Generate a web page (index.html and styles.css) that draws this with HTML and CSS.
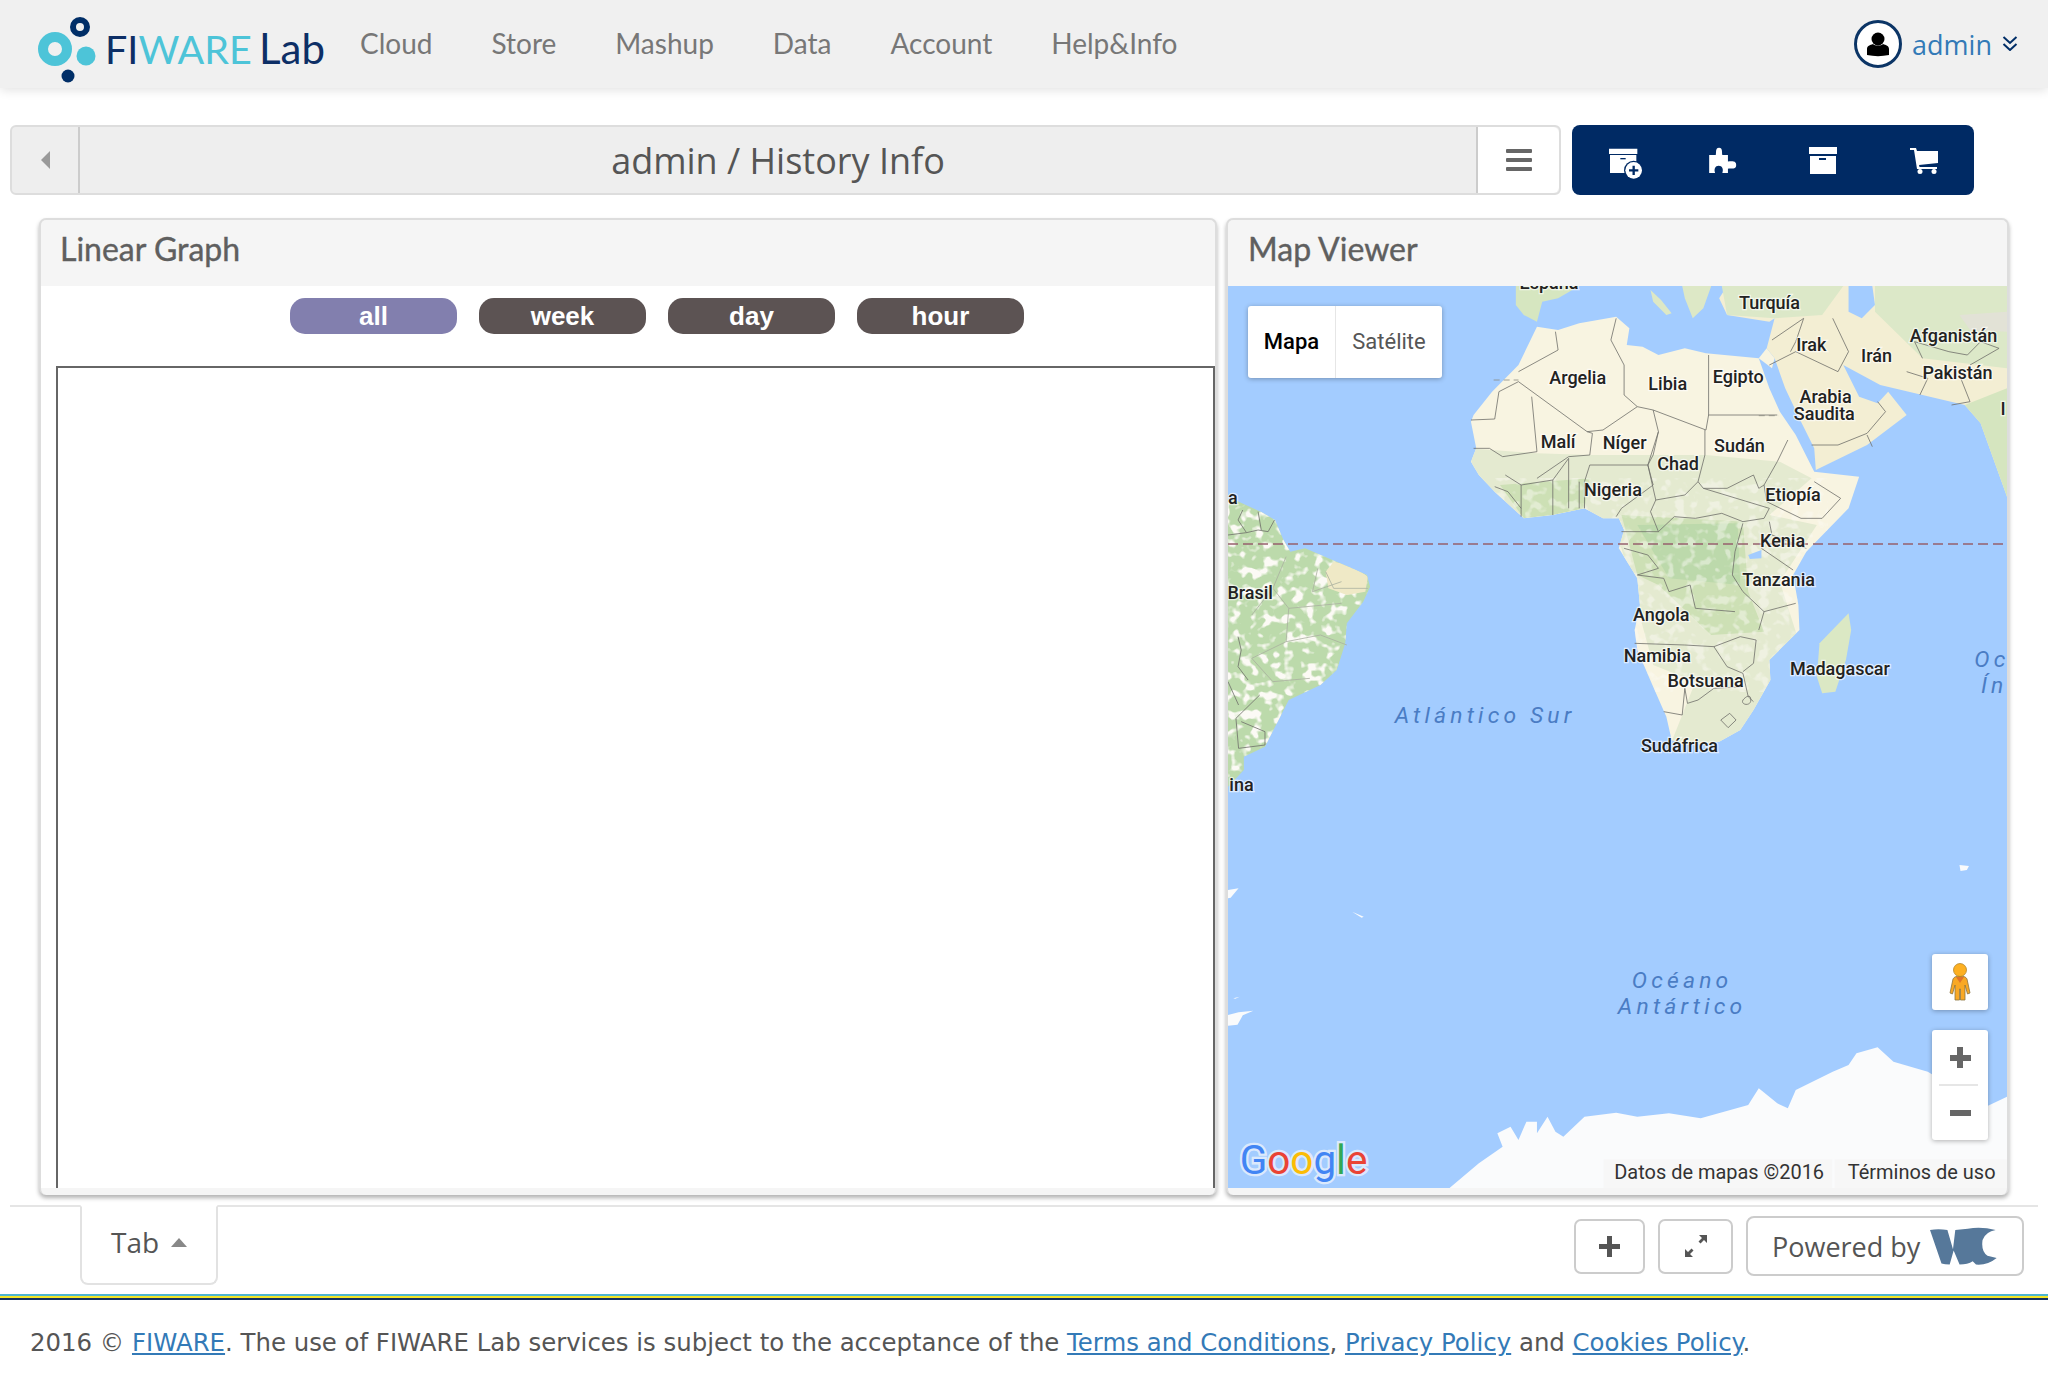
FILE: index.html
```html
<!DOCTYPE html>
<html lang="en">

<head>
    <meta charset="UTF-8">
    <meta name="viewport" content="width=device-width, initial-scale=1.0">
    <title>admin / History Info</title>
    <link rel="stylesheet" href="styles.css">
</head>

<body>
    <header class="site-header">
        <a class="logo" href="#">
            <svg class="logo-mark" width="60" height="70" viewBox="0 0 60 70">
                <circle cx="19" cy="35" r="12" fill="none" stroke="#4dc4d8" stroke-width="10" />
                <circle cx="44" cy="13" r="7" fill="none" stroke="#002e67" stroke-width="6" />
                <circle cx="50" cy="42" r="9.500" fill="#4dc4d8" />
                <circle cx="32" cy="62" r="6.500" fill="#002e67" />
            </svg>
            <span class="logo-text"><span class="navy">FI</span><span class="cyan">WARE</span> <span class="navy lab">Lab</span></span>
        </a>
        <nav class="main-nav">
            <a href="#">Cloud</a>
            <a href="#">Store</a>
            <a href="#">Mashup</a>
            <a href="#">Data</a>
            <a href="#">Account</a>
            <a href="#">Help&amp;Info</a>
        </nav>
        <a class="user-menu" href="#">
            <svg width="48" height="48" viewBox="0 0 48 48">
                <circle cx="24" cy="24" r="22.500" fill="#fff" stroke="#0c3566" stroke-width="3" />
                <circle cx="24" cy="19" r="6.500" fill="#000" />
                <path d="M13 35v-6c0-3 3-4 6-5 2 2 8 2 10 0 3 1 6 2 6 5v6c-7 1.500-15 1.500-22 0z" fill="#000" />
            </svg>
            <span>admin</span>
            <svg width="16" height="15" viewBox="0 0 16 15">
                <path d="M1.500 1l6.500 6 6.500-6M1.500 8l6.500 6 6.500-6" fill="none" stroke="#002e67" stroke-width="2" />
            </svg>
        </a>
    </header>

    <div class="toolbar">
        <div class="title-bar">
            <button class="back-btn" type="button"><span class="arrow-left"></span></button>
            <h1>admin / History Info</h1>
            <button class="menu-btn" type="button"><span></span><span></span><span></span></button>
        </div>
        <div class="action-bar">
            <button type="button">
                <svg class="icon-new" width="35" height="32" viewBox="25 22 105 96">
                    <path d="M28 27h85v16H28zM31 46h79v54H31z" fill="#fff" />
                    <rect x="62" y="55" width="16" height="4" fill="#002a64" />
                    <circle cx="102" cy="92" r="29" fill="#002a64" />
                    <circle cx="102" cy="92" r="25" fill="#fff" />
                    <path d="M102 78v28M88 92h28" stroke="#002a64" stroke-width="7" />
                </svg>
            </button>
            <button type="button">
                <svg width="30" height="28" viewBox="325 15 90 85">
                    <path d="M328 42H348C350 35 346 20 358 20 370 20 366 35 368 42H385V62C395 62 410 58 410 73 410 88 395 82 385 84V97H368C372 85 368 75 357 75 346 75 342 85 346 97H328Z" fill="#fff" />
                </svg>
            </button>
            <button type="button">
                <svg width="30" height="28" viewBox="0 0 30 28">
                    <path d="M1 1h28v7H1zM2 10h26v18H2z" fill="#fff" />
                    <rect x="11" y="12" width="7" height="2" fill="#002a64" />
                </svg>
            </button>
            <button type="button">
                <svg width="30" height="28" viewBox="0 0 30 28">
                    <path d="M1 2h6l1 3h21v12l-19 2 .5 2H28v2H8L5 4H1z" fill="#fff" />
                    <circle cx="11" cy="25.500" r="2.500" fill="#fff" />
                    <circle cx="25" cy="25.500" r="2.500" fill="#fff" />
                </svg>
            </button>
        </div>
    </div>

    <main class="workspace">
        <section class="panel panel-graph">
            <h2 class="panel-title">Linear Graph</h2>
            <div class="panel-body graph-body">
                <div class="range-buttons">
                    <button class="range-btn active" type="button">all</button>
                    <button class="range-btn" type="button">week</button>
                    <button class="range-btn" type="button">day</button>
                    <button class="range-btn" type="button">hour</button>
                </div>
                <div class="graph-box"></div>
            </div>
        </section>

        <section class="panel panel-map">
            <h2 class="panel-title">Map Viewer</h2>
            <div class="panel-body map">
                <svg class="map-canvas" viewBox="940 219 597 691" preserveAspectRatio="none">
                    <defs>
                        <clipPath id="africa-clip">
                            <path id="africa" d="M600 335L640 345 680 325 750 305 775 340 770 390 800 395 830 420 880 400 920 415 1020 430 1040 520 1060 590 1090 660 1125 770 1210 785 1190 880 1110 1010 1085 1080 1095 1170 1097 1245 1040 1335 1042 1395 1010 1485 985 1545 945 1580 880 1590 855 1575 845 1505 820 1415 790 1305 785 1245 795 1170 790 1090 755 1000 765 945 755 910 725 910 690 880 630 900 575 910 520 830 490 780 475 740 485 700 475 620 480 600 515 530 565 450Z" />
                        </clipPath>
                        <clipPath id="brazil-clip">
                            <path id="samerica" d="M0 855H28L78 891 104 915 120 975 133 1010 161 1000 205 1030 243 1055 278 1080 284 1115 271 1160 240 1225 237 1285 221 1365 190 1410 130 1455 85 1595 45 1625 45 1665 15 1715H0Z" />
                        </clipPath>
                        <filter id="speckle" x="0" y="0" width="100%" height="100%">
                            <feTurbulence type="fractalNoise" baseFrequency=".05 .035" numOctaves="2" seed="4" />
                            <feColorMatrix values="0 0 0 0 .97  0 0 0 0 .96  0 0 0 0 .91  0 0 0 7 -3.600" />
                        </filter>
                    </defs>

                    <rect x="940" y="219" width="597" height="691" fill="#a3ccff" />

                    <!-- land, in a coordinate system stretched to the map tiles -->
                    <svg x="940" y="219" width="597" height="691" viewBox="15 213 1475 2706" preserveAspectRatio="none">
                        <g fill="#f8f4e1">
                            <use href="#africa" />
                            <path d="M1020 430L1035 400 1050 430 1045 460Z" />
                            <path d="M1050 430L1070 520 1100 620 1125 700 1128 765 1225 690 1300 600 1265 530 1245 565 1210 545 1180 450 1250 510 1330 540 1410 570 1440 625 1490 845V213H1235L1240 270 1215 310 1190 290 1190 213H960L945 250 960 300 1040 320 1050 310 1035 400Z" fill="#f3eed3" />
                            <path d="M560 213H680L640 250 610 260 600 320 575 300 560 270Z" fill="#d6e6c0" />
                            <path d="M815 225L835 255 855 295 845 300 820 260ZM875 213H930L915 280 895 310 880 250Z" fill="#dde8c6" />
                            <path d="M1195 1245L1185 1335 1165 1430 1140 1435 1130 1385 1135 1285 1190 1195Z" fill="#dbe8c4" />
                        </g>
                        <use href="#samerica" fill="#bcdaab" />

                        <g clip-path="url(#africa-clip)">
                            <path d="M470 700L600 715 700 720 920 720 1060 740 1120 790 1040 900 1130 930 1060 1100 1100 1300 1000 1600 850 1600 900 1400 820 1350 760 1000 700 890 500 900Z" fill="#e4ead0" />
                            <path d="M530 810L700 790 690 880 630 900 575 910ZM760 900L990 920 1000 1130 1030 1250 930 1260 830 1110 790 1080Z" fill="#cde0b5" />
                            <path d="M790 930L980 925 985 1110 850 1090Z" fill="#bcd9ab" />
                            <rect x="500" y="790" width="650" height="640" fill="#fff" filter="url(#speckle)" opacity="0.45" />
                        </g>
                        <g clip-path="url(#brazil-clip)">
                            <rect x="0" y="855" width="300" height="860" fill="#fff" filter="url(#speckle)" />
                            <path d="M200 1070L215 1040 250 1050 280 1085 275 1130 240 1140 205 1120Z" fill="#efe9c6" />
                        </g>

                        <path d="M950 213H1180L1140 300 1050 310 960 300ZM1240 213H1490V460L1330 430 1240 290Z" fill="#dce8c8" />
                        <path d="M1400 300L1490 290V350L1420 345Z" fill="#e2e2d6" />
                        <path d="M1410 570L1440 625 1490 845V520Z" fill="#d5e5bf" />
                        <path d="M1000 1020L1025 1005 1025 1030 1003 1032Z" fill="#a3ccff" />

                        <!-- Antarctica -->
                        <path d="M435 2918L490 2845 535 2795 525 2755 550 2735 565 2775 580 2720H600V2755L620 2705 635 2750 650 2765 690 2705 750 2693 790 2705 850 2695 910 2710 1000 2670 1020 2620 1055 2665 1075 2680 1090 2625 1160 2570 1190 2550 1205 2515 1245 2497 1275 2540 1340 2570 1450 2675 1490 2645V2920H435Z" fill="#fafbfc" />
                        <path d="M1400 1950l18 3-4 12-12 3zM250 2090l22 15-4 3zM15 2025l20-5-15 28-5 2zM15 2400l20-8 28-5-20 14-10 28-25 5zM25 2350l12-5-8 6z" fill="#fafbfc" />

                        <!-- borders -->
                        <g class="borders">
                            <path d="M565 470L640 405 635 350M475 615L520 612 528 530 565 500 695 650 725 645 790 575 765 540 765 450 740 375 750 310" />
                            <path d="M590 545L600 710 535 725 510 700 480 700M695 650L705 655 700 720 660 725 600 790M700 750L810 750 830 650 820 585 790 575" />
                            <path d="M820 585L920 645 925 600 925 420M925 600L1055 600M918 645V720L905 800 915 820 960 820 1010 780 1020 820 1030 810 1055 740 1075 675" />
                            <path d="M830 650L820 720 810 750 825 855M905 800L880 840 825 855 815 890 830 950 860 905 900 910 950 895 990 920 1030 910 1040 880 915 820" />
                            <path d="M1030 810L1035 860 1100 910 1140 910 1175 850 1125 800M700 750L690 800 690 880M810 750L820 810 760 880 750 905" />
                            <path d="M990 925L975 1010 970 1080 990 1130 1030 1190 1020 1245M760 950H830M765 1000L810 1020 830 1060 790 1080 840 1090 850 1130 890 1110 900 1180 975 1190" />
                            <path d="M1040 920L1045 960 1110 1000M1025 1000L1085 1065M1030 1190L1090 1165M630 795V900M660 730V880M680 800V880M570 810V905M540 780L570 810 630 795 660 730M520 815L545 830 570 880" />
                            <path d="M785 1285L880 1290 935 1295 985 1265 1015 1275 1010 1345 990 1370M935 1295L960 1355 990 1375 1000 1445 1010 1460M880 1420L875 1500 840 1490M948 1515L965 1495 977 1515 962 1538ZM990 1455C985 1470 1005 1475 1005 1455S995 1445 990 1455ZM880 1420L885 1465 905 1455 935 1420 990 1415" />
                            <path d="M1120 690L1170 690 1225 655 1260 590 1245 560M1225 660L1235 695M1330 430L1315 380 1380 410 1415 420 1440 380 1475 400 1420 450M1160 310L1190 410 1170 470 1090 410 1040 450M1105 310L1090 380 1080 410M1045 375L1105 310M1400 480L1420 560 1385 570M1325 540L1340 490 1300 470" />
                            <path d="M43 885L34 915 50 953 15 960M50 953L72 945 91 950 103 915M72 890L78 945M34 1265L40 1305 34 1355 53 1395M75 1440L30 1510 35 1600 85 1590 85 1550 40 1520M15 1400L35 1470" />
                        </g>
                        <g class="state-lines">
                            <path d="M125 1025L100 1120 60 1200M100 1120L130 1180 230 1165M185 1060L175 1130 230 1100M130 1180L125 1280 190 1260 240 1290M125 1280L60 1330 100 1400 170 1390M200 1070L215 1120H280" />
                        </g>
                        <path class="sahara-dash" d="M518 495H565M1020 602H1058" />

                        <!-- equator -->
                        <path class="equator" d="M15 987H1490" />
                    </svg>

                    <g class="labels">
                        <text x="1186" y="221">España</text>
                        <text x="1355" y="237">Turquía</text>
                        <text x="1387" y="269">Irak</text>
                        <text x="1437" y="277">Irán</text>
                        <text x="1496" y="262">Afganistán</text>
                        <text x="1499" y="290">Pakistán</text>
                        <text x="1208" y="294">Argelia</text>
                        <text x="1277" y="299">Libia</text>
                        <text x="1331" y="293">Egipto</text>
                        <text x="1398" y="309">Arabia</text>
                        <text x="1397" y="322">Saudita</text>
                        <text x="1193" y="343">Malí</text>
                        <text x="1244" y="344">Níger</text>
                        <text x="1332" y="346">Sudán</text>
                        <text x="1285" y="360">Chad</text>
                        <text x="1373" y="384">Etiopía</text>
                        <text x="1235" y="380">Nigeria</text>
                        <text x="1365" y="419">Kenia</text>
                        <text x="1362" y="449">Tanzania</text>
                        <text x="957" y="459">Brasil</text>
                        <text x="1272" y="476">Angola</text>
                        <text x="1269" y="507">Namibia</text>
                        <text x="1306" y="526">Botsuana</text>
                        <text x="1409" y="517">Madagascar</text>
                        <text x="1286" y="576">Sudáfrica</text>
                        <text class="edge" x="940" y="386">a</text>
                        <text class="edge" x="941" y="606">ina</text>
                        <text class="edge" x="1532" y="318">I</text>
                    </g>
                    <g class="ocean-labels">
                        <text x="1137" y="554">Atlántico Sur</text>
                        <text class="edge" x="1512" y="511">Oc</text>
                        <text class="edge" x="1517" y="531">Ín</text>
                        <text x="1288" y="757">Océano</text>
                        <text x="1288" y="777">Antártico</text>
                    </g>

                    <text class="google-mark" x="949" y="899"><tspan fill="#4285f4">G</tspan><tspan fill="#ea4335">o</tspan><tspan fill="#fbbc05">o</tspan><tspan fill="#4285f4">g</tspan><tspan fill="#34a853">l</tspan><tspan fill="#ea4335">e</tspan></text>

                    <rect class="attribution" x="1228" y="888" width="175" height="22" />
                    <rect class="attribution" x="1405" y="888" width="132" height="22" />
                    <text class="attribution-text" x="1236" y="903">Datos de mapas ©2016</text>
                    <text class="attribution-text" x="1415" y="903">Términos de uso</text>
                </svg>

                <div class="map-type">
                    <button class="selected" type="button">Mapa</button>
                    <button type="button">Satélite</button>
                </div>
                <button class="street-view" type="button">
                    <svg width="22" height="38" viewBox="0 0 22 38">
                        <path d="M11 13c-4 0-6 1-7 3L1 30l2.500 1L6 22v15h4.500V26h1v11H16V22l2.500 9 2.500-1-3-14c-1-2-3-3-7-3z" fill="#f9a825" stroke="#8a7440" stroke-width=".8" />
                        <circle cx="11" cy="7" r="6.500" fill="#fdb022" stroke="#a87a1c" stroke-width=".7" />
                        <path d="M7 14h8l-4 6z" fill="#e0742a" />
                    </svg>
                </button>
                <div class="zoom-control">
                    <button type="button"><span class="plus-icon"></span></button>
                    <button type="button"><span class="minus-icon"></span></button>
                </div>
            </div>
        </section>
    </main>

    <div class="tab-bar">
        <button class="tab" type="button">Tab <span class="caret-up"></span></button>
        <div class="tab-actions">
            <button class="tool-btn btn-add" type="button"><span class="plus-icon"></span></button>
            <button class="tool-btn btn-expand" type="button">
                <svg width="24" height="24" viewBox="0 0 24 24">
                    <path d="M15 1h8v8l-3-3-3.500 3.500-2-2L18 4zM9 23H1v-8l3 3 3.500-3.500 2 2L6 20z" fill="#555" />
                </svg>
            </button>
            <a class="powered-by" href="#">Powered by
                <svg width="67" height="39" viewBox="35 22 204 116">
                    <path d="M35 30Q60 25 88 30L105 88 112 30 150 26Q190 18 235 30 205 35 195 60 190 95 210 108L238 115Q210 138 175 135L165 125Q150 135 125 135L107 92 95 135Q80 135 70 132Z" fill="#56789a" />
                </svg>
            </a>
        </div>
    </div>

    <footer class="site-footer">
        <p>2016 © <a href="#">FIWARE</a>. The use of FIWARE Lab services is subject to the acceptance of the <a href="#">Terms and Conditions</a>, <a href="#">Privacy Policy</a> and <a href="#">Cookies Policy</a>.</p>
    </footer>
</body>

</html>
```

FILE: styles.css
```css
* {
    box-sizing: border-box;
}

body {
    margin: 0;
    background-color: #fff;
    color: #555;
    font-family: "Open Sans", sans-serif;
    overflow: hidden;
}

a {
    text-decoration: none;
}

button {
    font-family: inherit;
    cursor: pointer;
}

/* top header */
.site-header {
    height: 88px;
    background-color: #f0f0f0;
    box-shadow: 0 2px 10px rgba(0, 0, 0, 0.12);
    display: flex;
    align-items: center;
    padding: 0 30px 0 36px;
}

.logo {
    display: flex;
    align-items: center;
    width: 324px;
}

.logo-mark {
    margin-top: 10px;
    flex: none;
}

.logo-text {
    font-family: "Lato", sans-serif;
    font-size: 39.500px;
    word-spacing: -3px;
    margin-left: 9px;
    margin-top: 8px;
    white-space: nowrap;
}

.navy {
    color: #0d2f66;
}

.cyan {
    color: #4dc4d8;
}

.lab {
    font-size: 42px;
}

.main-nav {
    display: flex;
    gap: 59px;
    font-family: "Lato", sans-serif;
    font-size: 28px;
    margin-top: -2px;
}

.main-nav a {
    color: #777;
}

.user-menu {
    margin-left: auto;
    display: flex;
    align-items: center;
    gap: 10px;
    color: #337ab7;
    font-size: 27px;
}

.user-menu svg:last-child {
    margin-top: -2px;
}

/* title and action bar */
.toolbar {
    display: flex;
    margin: 37px 0 0 10px;
    height: 70px;
}

.title-bar {
    width: 1551px;
    display: flex;
    background-color: #eee;
    border: 2px solid #ddd;
    border-radius: 6px;
}

.title-bar h1 {
    flex: 1;
    margin: 0;
    font-size: 36px;
    font-weight: 400;
    line-height: 68px;
    text-align: center;
    color: #555;
}

.back-btn {
    width: 68px;
    background: none;
    border: none;
    border-right: 2px solid #ccc;
    display: flex;
    align-items: center;
    padding: 0 0 0 29px;
}

.arrow-left {
    border-style: solid;
    border-width: 9px 9px 9px 0;
    border-color: transparent #999 transparent transparent;
}

.menu-btn {
    width: 83px;
    background-color: #fff;
    border: none;
    border-left: 2px solid #ccc;
    border-radius: 0 6px 6px 0;
    display: flex;
    flex-direction: column;
    align-items: center;
    justify-content: center;
    gap: 5px;
}

.menu-btn span {
    width: 26px;
    height: 4px;
    border-radius: 1px;
    background-color: #666;
}

.action-bar {
    width: 402px;
    margin-left: 11px;
    background-color: #002a64;
    border-radius: 8px;
    display: flex;
}

.action-bar button {
    flex: 1;
    background: none;
    border: none;
    padding: 0;
    display: flex;
    align-items: center;
    justify-content: center;
}

.icon-new {
    margin: 6px 0 0 7px;
}

/* widgets */
.workspace {
    display: flex;
    gap: 9px;
    height: 977px;
    margin: 23px 0 0 39px;
}

.panel {
    display: flex;
    flex-direction: column;
    background-color: #f5f5f5;
    border: 2px solid #ddd;
    border-bottom: none;
    border-radius: 7px;
    padding-bottom: 7px;
    box-shadow: 0 3px 4px rgba(0, 0, 0, 0.3);
}

.panel-graph {
    width: 1178px;
}

.panel-map {
    width: 783px;
}

.panel-title {
    margin: 0;
    height: 66px;
    padding-left: 19px;
    font-family: "Lato", sans-serif;
    font-size: 32px;
    font-weight: 400;
    line-height: 57px;
    color: #5f5f5f;
    -webkit-text-stroke: 0.4px #5f5f5f;
    flex: none;
}

.panel-map .panel-title {
    padding-left: 20px;
}

.panel-body {
    flex: 1;
    min-height: 0;
    background-color: #fff;
}

.graph-body {
    display: flex;
    flex-direction: column;
    padding-left: 15px;
    overflow: hidden;
}

.range-buttons {
    display: flex;
    gap: 22px;
    padding: 12px 0 0 234px;
    flex: none;
}

.range-btn {
    width: 167px;
    height: 36px;
    border: none;
    border-radius: 15px;
    background-color: #5c5353;
    color: #fff;
    font-family: "Liberation Sans", sans-serif;
    font-size: 26px;
    font-weight: bold;
    line-height: 36px;
    padding: 0;
}

.range-btn.active {
    background-color: #827fae;
}

.graph-box {
    margin-top: 32px;
    flex: 1;
    border: 2px solid #666;
    border-bottom: none;
}

/* map */
.map {
    position: relative;
    overflow: hidden;
}

.map-canvas {
    display: block;
    width: 100%;
    height: 100%;
}

.borders path {
    fill: none;
    stroke: #6f6f6a;
    stroke-width: 0.8;
    vector-effect: non-scaling-stroke;
}

.state-lines path {
    fill: none;
    stroke: #a9b0a0;
    stroke-width: 0.8;
    vector-effect: non-scaling-stroke;
}

.sahara-dash {
    fill: none;
    stroke: #8a8a80;
    stroke-width: 0.8;
    stroke-dasharray: 6 4;
    vector-effect: non-scaling-stroke;
}

.equator {
    fill: none;
    stroke: #97606e;
    stroke-width: 1.5;
    stroke-dasharray: 10 5;
    vector-effect: non-scaling-stroke;
}

.labels text {
    font-family: "Roboto", sans-serif;
    font-size: 13.800px;
    font-weight: 500;
    fill: #222;
    text-anchor: middle;
    paint-order: stroke;
    stroke: rgba(255, 255, 255, 0.65);
    stroke-width: 2px;
}

.ocean-labels text {
    font-family: "Roboto", sans-serif;
    font-size: 17.500px;
    font-style: italic;
    letter-spacing: 3.200px;
    fill: #4a7cc4;
    text-anchor: middle;
}

.labels .edge,
.ocean-labels .edge {
    text-anchor: start;
}

.google-mark {
    font-family: "Roboto", sans-serif;
    font-size: 31px;
    paint-order: stroke;
    stroke: rgba(228, 238, 252, 0.9);
    stroke-width: 3.500px;
}

.attribution {
    fill: rgba(245, 245, 245, 0.7);
}

.attribution-text {
    font-family: "Roboto", sans-serif;
    font-size: 15.300px;
    fill: #333;
}

.map-type {
    position: absolute;
    top: 20px;
    left: 20px;
    width: 194px;
    height: 72px;
    display: flex;
    background-color: #fff;
    border-radius: 3px;
    box-shadow: 0 1px 5px rgba(0, 0, 0, 0.3);
}

.map-type button {
    flex: 1;
    background: none;
    border: none;
    padding: 0 0 2px;
    font-family: "Roboto", sans-serif;
    font-size: 22px;
    color: #565656;
}

.map-type .selected {
    flex: none;
    width: 88px;
    border-right: 1px solid #e6e6e6;
    color: #000;
    font-weight: 500;
}

.street-view {
    position: absolute;
    right: 19px;
    bottom: 178px;
    width: 56px;
    height: 56px;
    background-color: #fff;
    border: none;
    border-radius: 3px;
    padding: 0;
    box-shadow: 0 1px 5px rgba(0, 0, 0, 0.3);
    display: flex;
    align-items: center;
    justify-content: center;
}

.zoom-control {
    position: absolute;
    right: 19px;
    bottom: 48px;
    width: 56px;
    height: 110px;
    background-color: #fff;
    border-radius: 3px;
    box-shadow: 0 1px 5px rgba(0, 0, 0, 0.3);
    display: flex;
    flex-direction: column;
}

.zoom-control button {
    flex: 1;
    background: none;
    border: none;
    padding: 0;
    display: flex;
    align-items: center;
    justify-content: center;
}

.zoom-control button:first-child::after {
    content: "";
    position: absolute;
    left: 7px;
    right: 10px;
    top: 54px;
    height: 2px;
    background-color: #e6e6e6;
}

.plus-icon {
    display: block;
    width: 21px;
    height: 21px;
    background:
        linear-gradient(#666, #666) center / 100% 6px no-repeat,
        linear-gradient(#666, #666) center / 6px 100% no-repeat;
}

.minus-icon {
    display: block;
    width: 21px;
    height: 6px;
    background-color: #666;
}

/* tabs */
.tab-bar {
    margin: 10px 10px 0;
    height: 89px;
    border-top: 2px solid #e5e5e5;
    display: flex;
    justify-content: space-between;
    align-items: flex-start;
}

.tab {
    margin: -2px 0 0 70px;
    width: 138px;
    height: 80px;
    background-color: #fff;
    border: 2px solid #e2e2e2;
    border-top-color: #fff;
    border-radius: 0 0 8px 8px;
    font-size: 28px;
    color: #555;
    display: flex;
    align-items: center;
    padding: 0 0 6px 29px;
    gap: 12px;
}

.caret-up {
    border-style: solid;
    border-width: 0 8px 9px 8px;
    border-color: transparent transparent #888 transparent;
}

.tab-actions {
    display: flex;
    align-items: center;
    margin-right: 14px;
    margin-top: 9px;
}

.tool-btn {
    height: 55px;
    background-color: #fff;
    border: 2px solid #ccc;
    border-radius: 7px;
    padding: 0;
    display: flex;
    align-items: center;
    justify-content: center;
}

.btn-add {
    width: 71px;
    margin-right: 13px;
}

.btn-add .plus-icon {
    background:
        linear-gradient(#555, #555) center / 100% 5px no-repeat,
        linear-gradient(#555, #555) center / 5px 100% no-repeat;
}

.btn-expand {
    width: 75px;
    margin-right: 13px;
}

.powered-by {
    width: 278px;
    height: 60px;
    border: 2px solid #ccc;
    border-radius: 8px;
    display: flex;
    align-items: center;
    gap: 10px;
    padding-left: 24px;
    font-size: 27px;
    color: #555;
}

/* footer */
.site-footer {
    border-top: 2px solid #4db5d0;
    height: 94px;
    background-image: linear-gradient(#f4e625 2px, #12305f 2px, #12305f 4px, transparent 4px);
    background-repeat: no-repeat;
}

.site-footer p {
    margin: 0;
    padding: 22px 0 0 30px;
    font-family: "DejaVu Sans", sans-serif;
    font-size: 24.400px;
    line-height: 50px;
    color: #555;
    white-space: nowrap;
}

.site-footer a {
    color: #337ab7;
    text-decoration: underline;
}
```
